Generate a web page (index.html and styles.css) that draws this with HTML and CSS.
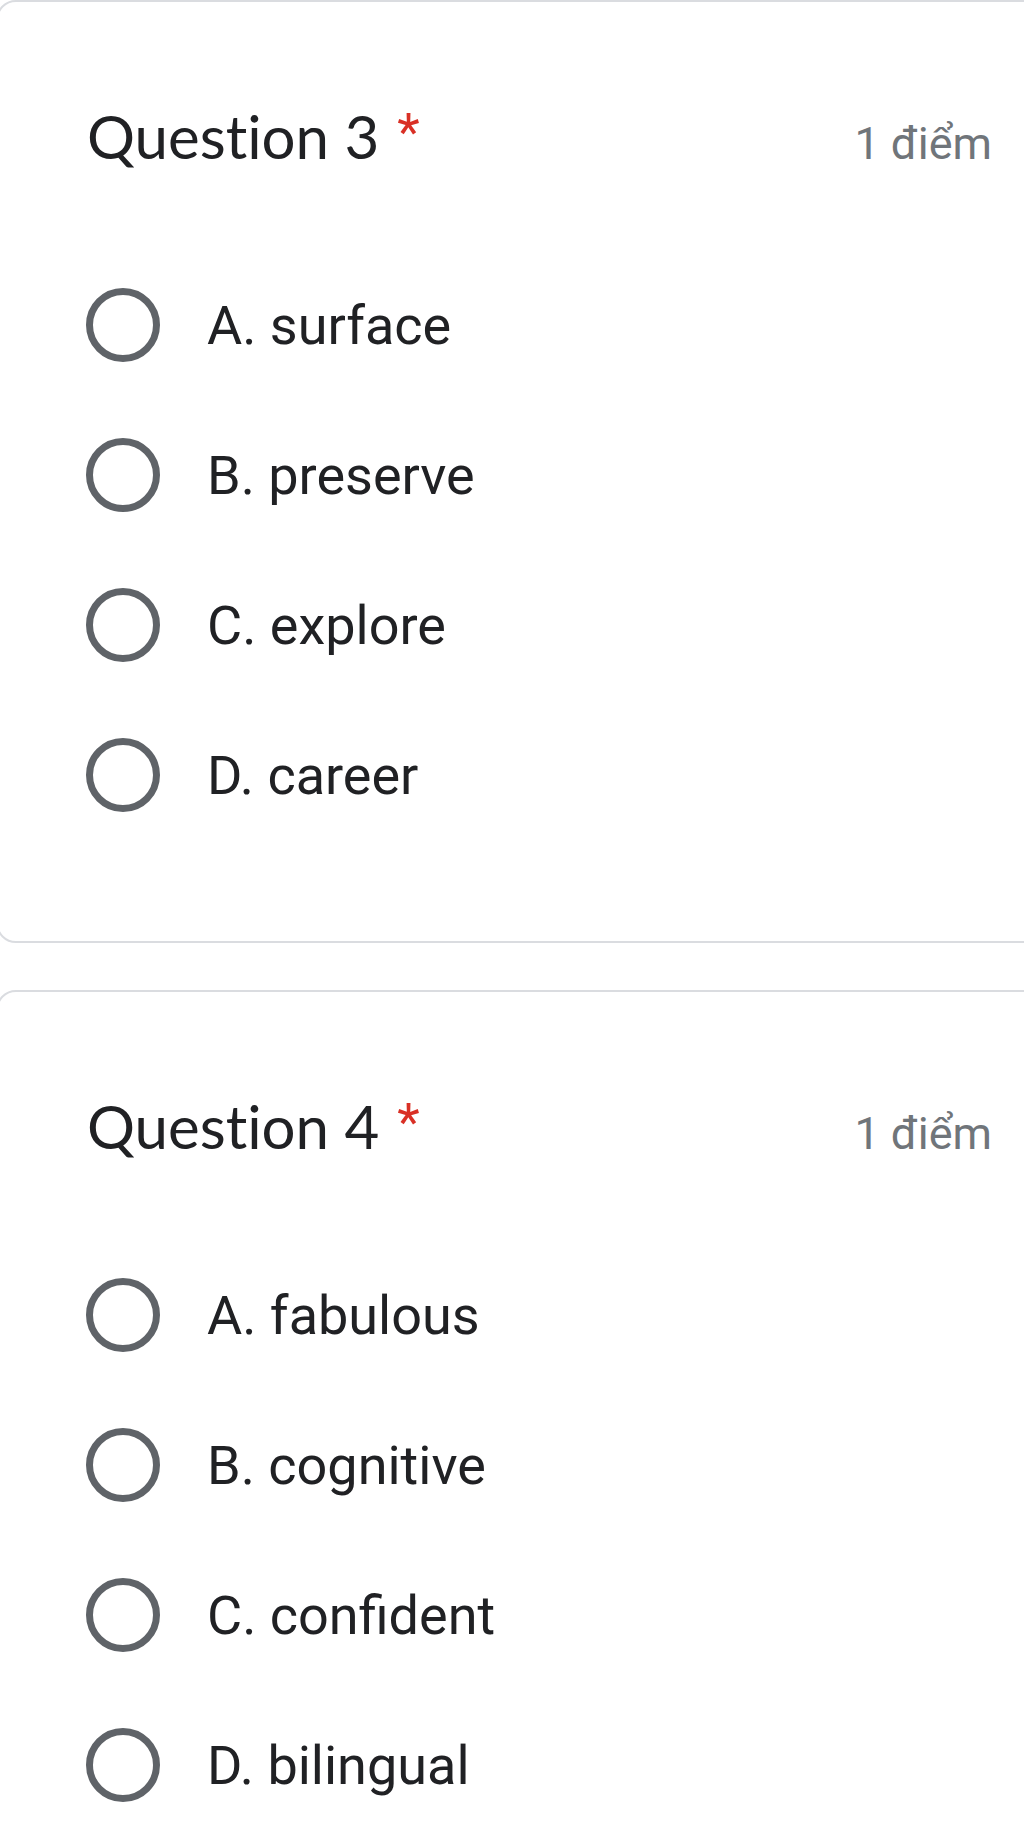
FILE: index.html
```html
<!DOCTYPE html>
<html lang="vi">
<head>
<meta charset="utf-8">
<title>Questions</title>
<link rel="stylesheet" href="styles.css">
</head>
<body>
<div class="page">
  <section class="card">
    <div class="q-head">
      <div class="q-title">Question 3<span class="req">*</span></div>
      <div class="q-points">1 điểm</div>
    </div>
    <ul class="options">
      <li class="option"><span class="radio"></span><span class="label">A. surface</span></li>
      <li class="option"><span class="radio"></span><span class="label">B. preserve</span></li>
      <li class="option"><span class="radio"></span><span class="label">C. explore</span></li>
      <li class="option"><span class="radio"></span><span class="label">D. career</span></li>
    </ul>
  </section>
  <section class="card">
    <div class="q-head">
      <div class="q-title">Question 4<span class="req">*</span></div>
      <div class="q-points">1 điểm</div>
    </div>
    <ul class="options">
      <li class="option"><span class="radio"></span><span class="label">A. fabulous</span></li>
      <li class="option"><span class="radio"></span><span class="label">B. cognitive</span></li>
      <li class="option"><span class="radio"></span><span class="label">C. confident</span></li>
      <li class="option"><span class="radio"></span><span class="label">D. bilingual</span></li>
    </ul>
  </section>
</div>
</body>
</html>
```

FILE: styles.css
```css
html, body {
  margin: 0;
  padding: 0;
  background: #ffffff;
}
body {
  font-family: Roboto, "Liberation Sans", sans-serif;
  color: #202124;
  overflow: hidden;
}
.page {
  display: flex;
  flex-direction: column;
  gap: 47px;
}
.card {
  margin: 0 -40px 0 -4px;
  border: 2px solid #dadce0;
  border-radius: 20px;
  background: #fff;
  padding: 95px 70px 91px 89px;
}
.q-head {
  display: flex;
  justify-content: space-between;
  align-items: baseline;
  height: 72px;
}
.q-title {
  font-family: Lato, "Open Sans", sans-serif;
  font-size: 60px;
  line-height: 72px;
  color: #202124;
  font-variant-ligatures: none;
  font-feature-settings: "liga" 0;
}
.req {
  font-family: Roboto, sans-serif;
  color: #d93025;
  font-size: 52px;
  margin-left: 18px;
  vertical-align: 9px;
}
.q-points {
  font-size: 45px;
  color: #70757a;
}
.options {
  list-style: none;
  margin: 81px 0 0 0;
  padding: 0;
}
.option {
  height: 150px;
  display: flex;
  align-items: center;
}
.radio {
  box-sizing: border-box;
  width: 74px;
  height: 74px;
  border: 7px solid #5f6368;
  border-radius: 50%;
  margin-left: -1px;
  flex: none;
}
.label {
  margin-left: 47px;
  font-size: 54px;
  color: #202124;
}
```
